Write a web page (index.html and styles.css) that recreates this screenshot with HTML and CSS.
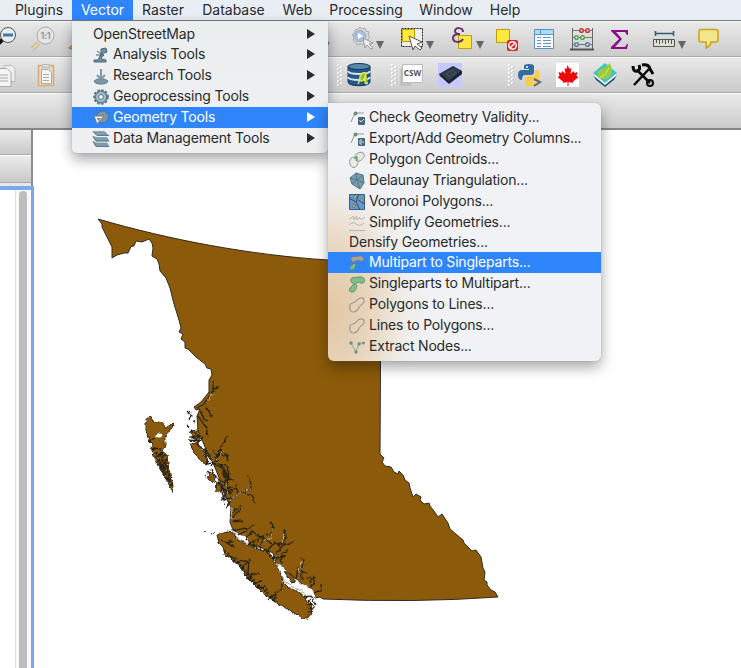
FILE: index.html
```html
<!DOCTYPE html>
<html lang="en">
<head>
<meta charset="utf-8">
<title>Vector menu</title>
<link rel="stylesheet" href="styles.css">
</head>
<body>
<div class="app">
<nav class="menubar">
<span>Plugins</span><span class="open">Vector</span><span>Raster</span><span>Database</span><span>Web</span><span>Processing</span><span>Window</span><span>Help</span>
</nav>

<div class="toolbar tools-main">
<svg viewBox="0 0 24 24"><path d="M7 17l4-4" stroke="#111" stroke-width="4"/><circle cx="16" cy="9" r="7.500" fill="#e8edf2" stroke="#555"/><path d="M11 9h10" stroke="#3f77aa" stroke-width="3"/></svg>
<svg viewBox="0 0 24 24"><path d="M1.500 23l6-6" stroke="#aaa" stroke-width="4"/><path d="M1.500 23l6-6" stroke="#ecd58c" stroke-width="2.500"/><circle cx="14.500" cy="9.500" r="8.500" fill="#e4e4e4" stroke="#aaa"/><text x="14.500" y="13" class="ratio">1:1</text></svg>
<svg viewBox="0 0 24 24"><path d="M1 22l5-4v6z" fill="#e9bd20" stroke="#8b741d"/></svg>
<svg viewBox="0 0 24 24"><path d="M2 16h8l-4 7z" fill="#777"/></svg>
<svg viewBox="0 0 24 24"><path d="M10 1l2 2 3-1 1 3 3 1-1 3 2 2-2 2 0 3-3 1-2 2-3-1-3 1-1-3-3-2 1-3-2-2 3-2 0-3 3-1z" fill="#d5d7d9" stroke="#aaa"/><circle cx="10" cy="10" r="5.500" fill="#a8c3df" stroke="#9aabba"/><path d="M8 7l5 3-5 3z" fill="#fff"/><path d="M13 12l10 5-4 1 4 4-2 1-4-4-2 3z" fill="#eee" stroke="#999"/></svg>
<svg viewBox="0 0 24 24"><path d="M1 15h8l-4 8z" fill="#666"/></svg>
<svg viewBox="0 0 24 24"><path d="M1.500 2.500h21v18h-21z" fill="#eee" stroke="#222" stroke-dasharray="2 1"/><path d="M2.500 3.500h12v12h-12z" fill="#ffe83f" stroke="#bda000"/><path d="M9 10l13 6-5 2 5 4-2 2-5-4-2 4z" fill="#fff" stroke="#555"/></svg>
<svg viewBox="0 0 24 24"><path d="M1 15h8l-4 8z" fill="#666"/></svg>
<svg viewBox="0 0 24 24"><path d="M8.500 9.500h13v13h-13z" fill="#ffe83f" stroke="#bda000"/><path d="M13 6c0-5-8-5-8-1 0 2 2 3 5 3-5 0-7 2-7 4 0 5 8 5 10 1" fill="none" stroke="#653565" stroke-width="2"/></svg>
<svg viewBox="0 0 24 24"><path d="M1 15h8l-4 8z" fill="#666"/></svg>
<svg viewBox="0 0 24 24"><path d="M1.500 3.500h13v13h-13z" fill="#ffe83f" stroke="#bda000"/><rect x="12" y="14" width="11" height="11" rx="2" fill="#d72626"/><circle cx="17.500" cy="19.500" r="3.700" fill="none" stroke="#fff" stroke-width="1.500"/><path d="M15 22l5-5" stroke="#fff" stroke-width="1.500"/></svg>
<svg viewBox="0 0 24 24"><path d="M2.500 3.500h19v19h-19z" fill="#f8fbff" stroke="#5d91c4"/><path d="M3 4h18v4H3z" fill="#a8dff5"/><path d="M2 8.500h20M8.500 4v5" stroke="#5d91c4"/><path d="M5 11.500h4m2 0h8M5 14.500h4m2 0h8M5 17.500h4m2 0h8M5 20.500h4m2 0h8" stroke="#6597c7"/></svg>
<svg viewBox="0 0 24 24"><path d="M2.500 2v22M22.500 2v22" stroke="#666"/><path d="M0 23.500h24" stroke="#555" stroke-width="2"/><path d="M3 4.500h19M3 11.500h19M3 18.500h19" stroke="#777"/><g fill="#eee" stroke-width="1.500"><g stroke="#c33"><circle cx="11.500" cy="4.500" r="1.800"/><circle cx="17.500" cy="4.500" r="1.800"/></g><g stroke="#55a55a"><circle cx="6.500" cy="11.500" r="1.800"/><circle cx="12.500" cy="11.500" r="1.800"/></g><g stroke="#537f9f"><circle cx="6.500" cy="18.500" r="1.800"/><circle cx="17.500" cy="18.500" r="1.800"/></g></g></svg>
<svg viewBox="0 0 24 24"><path d="M3 4h17v5h-1l-2-3H8l6 7-7 8h10l2-3h1l-1 5H3v-2l8-8-8-8z" fill="#880d88"/></svg>
<svg viewBox="0 0 24 24"><path d="M3.500 5v5m18-5v5M3 7.500h19" stroke="#315e76" stroke-width="1.600"/><path d="M1.500 13.500h21v7h-21z" fill="#dcded4" stroke="#555"/><path d="M4.500 14v3m3-3v4m3-4v3m3-3v4m3-4v3m3-3v4" stroke="#555"/></svg>
<svg viewBox="0 0 24 24"><path d="M1 15h8l-4 8z" fill="#666"/></svg>
<svg viewBox="0 0 24 24"><path d="M5 3.500h15q2 0 2 2V14q0 2-2 2h-5q-1 5-5 6 1-4 0-6H5q-2 0-2-2V5.500q0-2 2-2z" fill="#f3e68d" stroke="#c8a51c" stroke-width="1.500"/></svg>
<svg viewBox="0 0 24 24"><path d="M6.500 6.500h20v11h-20z" fill="#eee" stroke="#777" stroke-dasharray="1 1"/></svg>
</div>

<div class="toolbar tools-plugins">
<svg viewBox="0 0 24 24"><path d="M8 2.500h8l3 3v13H8z" fill="#eee" stroke="#bbb"/><path d="M2 5.500h9l4 4v14H2z" fill="#f4f4f4" stroke="#aaa"/><path d="M3 12h9m-9 3h9m-9 3h9" stroke="#aaa"/></svg>
<svg viewBox="0 0 24 24"><path d="M4.500 2.500h15v20h-15z" fill="#e9d7bc" stroke="#d3ad79" stroke-width="1.500"/><path d="M8.500 1.500h7v3h-7z" fill="#ddd" stroke="#bbb"/><path d="M7.500 6.500h7l3 3v11h-10z" fill="#f5f5f5" stroke="#aaa"/><path d="M9 11.500h6m-6 3h6m-6 3h6" stroke="#aaa"/></svg>
<svg viewBox="0 0 24 24"><path d="M2 1v23M5 3v20" stroke="#fff" stroke-width="2" stroke-dasharray="2 2"/><path d="M3 2v22M6 4v20" stroke="#aaa" stroke-dasharray="1 3"/></svg>
<svg viewBox="0 0 24 24"><path d="M1 3v16c0 5 22 5 22 0V3z" fill="#245687" stroke="#17385a"/><ellipse cx="12" cy="3.500" rx="11" ry="3" fill="#5788aa" stroke="#17385a"/><path d="M1 8c1 4 21 4 22 0M1 14c1 4 21 4 22 0" fill="none" stroke="#d2e4ed" stroke-width="2"/><path d="M19 10c-5-1-7 4-6 7 2 3 5-1 6-7l-1 8c0 3 1 3 3 2M13 17l-2 4" fill="#93bd35" stroke="#dce94b" stroke-width="1.500"/></svg>
<svg viewBox="0 0 24 24"><path d="M2 1v23M5 3v20" stroke="#fff" stroke-width="2" stroke-dasharray="2 2"/><path d="M3 2v22M6 4v20" stroke="#aaa" stroke-dasharray="1 3"/></svg>
<svg viewBox="0 0 24 24"><path d="M1.500 5.500v16h10" fill="none" stroke="#bbb" stroke-width="2"/><path d="M2.500 1.500h20v18h-20z" fill="#fff" stroke="#bbb"/><text x="12.500" y="13" class="csw">CSW</text></svg>
<svg viewBox="0 0 24 24"><path d="M0 0h24v24H0z" fill="#c7c8ff"/><path d="M1 11l14-8 9 5v3l-13 10-9-8z" fill="#16232e"/><path d="M2 11l13-7 8 4-12 10z" fill="#2e3d4a"/><path d="M8 11l6-4 4 3-7 4z" fill="none" stroke="#435463"/></svg>
<svg viewBox="0 0 24 24"><path d="M2 1v23M5 3v20" stroke="#fff" stroke-width="2" stroke-dasharray="2 2"/><path d="M3 2v22M6 4v20" stroke="#aaa" stroke-dasharray="1 3"/></svg>
<svg viewBox="0 0 24 24"><path d="M6 6V3q0-2 5-2t5 2v6q0 3-3 3H7q-3 0-3 5-4 0-4-5t4-5h7V6z" fill="#316e9e"/><path d="M17 7h2q3 0 3 5t-3 6h-7v1h5v2q0 2-5 2t-5-2v-5q0-3 3-3h5q2 0 2-3z" fill="#f8ce48"/><circle cx="9" cy="4" r="1" fill="#fff"/><path d="M16 16l6 3-6 4" fill="none" stroke="#666" stroke-width="2"/></svg>
<svg viewBox="0 0 24 24"><path d="M0 0h23v24H0z" fill="#fff"/><path d="M11.500 2l2 4 2-1-1 6 3-3 1 2 3-1-1 4 2 1-6 5 1 1-5-1v4h-1v-4l-5 1 1-1-6-5 2-1-1-4 3 1 1-2 3 3-1-6 2 1z" fill="#ef0808"/></svg>
<svg viewBox="0 0 24 24"><path d="M0 12l12 9 12-9-3 5-9 7-9-7z" fill="#245e6d"/><path d="M0 10L12 0l12 10-12 10z" fill="#3cc4cf"/><path d="M1 12l11 9 11-9" fill="none" stroke="#fff" stroke-width="1.500"/><path d="M5 14C3 5 11 7 17 0c4 9 1 17-7 16-2 0-4-1-5-2z" fill="#9bca3b"/><path d="M7 15q7-4 9-10" fill="none" stroke="#d9ec84"/></svg>
<svg viewBox="0 0 24 24"><g fill="none" stroke="#080808"><path d="M6 7l13 13M18 6L3 22" stroke-width="2.500"/><path d="M2 3q0 6 4 5t2-6M11 2q7-1 8 4l3 5" stroke-width="3"/><circle cx="19" cy="20" r="3" stroke-width="2"/></g></svg>
</div>
<div class="toolbar tools-empty"></div>

<div class="workspace">
<aside class="side">
<div class="panel-head"></div><div class="panel-head tall"></div><div class="panel-edge"></div>
<div class="layer-list"><div class="scroll"><div class="thumb"></div></div></div>
</aside>
<main class="canvas">
<svg class="map" viewBox="33 130 708 538">
<defs><filter id="rough" x="-10%" y="-10%" width="120%" height="120%"><feTurbulence type="fractalNoise" baseFrequency=".22" numOctaves="2" seed="8"/><feDisplacementMap in="SourceGraphic" scale="4" xChannelSelector="R" yChannelSelector="G"/></filter></defs>
<g class="land">
<path d="M98 219C170 240 250 255 328 260L381 262 380 454 384 458 382 462 385 466 391 467 394 472 398 474 399 471 403 475 405 480 409 483 410 488 413 497 416 494 421 497 420 500 424 504 429 503 430 506 434 511 438 517 442 514 448 523 450 529 457 535 463 540 464 543 472 551 476 550 481 557 483 568 485 572 484 580 487 582 487 585 491 590 495 592 498 597Q415 603 323 599L320 597 315 598 313 590 305 587 298 580 290 575 283 567 276 562 273 553 262 548 250 545 248 540 242 535 233 530 230 522 231 507 227 500 222 488 219 478 216 470 213 463 207 452 203 442 198 431 197 416 200 409 196 410 194 407 201 402 209 392 209 380 212 375 211 369 207 368 205 364 196 357 188 349 185 348 185 342 181 339 183 334 179 332 181 328 179 320 174 304 170 288 166 278 160 271 159 264 157 259 152 256 153 248 152 243 149 239 142 242 136 241 134 246 131 246.500 128 253 124 253 117 255 112 258 112 247 102 227 102 224z"/>
</g>
<g filter="url(#rough)">
<g class="land">
<path d="M150 416l3 5 5 1 5 1 2 4 4-1 5-3-3 7-6 7v8l-3 6 5 4 1 9 2 10 3 12v6l-6-11-6-11-7-14-3-8 2-4-4-4-3-10v-11z"/>
<path d="M217 535l10-3 6 1 5 7 10 5 12 5 10 3 5 9 5 10 3 10 5 5 10 5 7 6 5 7 2 10-7 4-13-7-15-9-14-10-10-10-8-8-8-13-12-7-2-8-4-4z"/>
<path d="M190 443l8 1 6 9 4 11-5-1-8-9zM190 431l8-1 2 8-6 1zM208 471l6 5 1 7-6-4zM217 482l4 5-1 6-4-3z"/>
</g>
<g class="strait">
<path d="M155 436l5-3 3 2-4 3zM231 529l7 5 10 3 1 7-10-4zM277 563l8 6 8 10 12 6 8 5 3 8-9-3-12-8-11-6z"/>
</g>
<path class="land" d="M284 571l7 3 5 7-5 1z"/>
<g class="inlets">
<path d="M213 381v10l-10 14-6 3M213 388l6-1M200 410l4 9 4 2M198 416l8 11 2 9M205 405l7 12M202 437l-5 8 9 5 8 14 6-3M191 431l8 5-8 1 9 4-12-1M205 450l3 14 9-4 5-16 6-8M211 467l7-13 10 2M220 449l6 5 2 7M217 456l-4-6M218 464l9 2 2 10-8-3"/>
<path d="M212 463l12 6 3 10-8 4 4 12 2 9M223 470l3 12-4 7 9-1-9 11 9-1-5 10M225 480l9-1M230 473l-3 13M221 486l11 8M226 494l10-6M229 501l13-9 9-3-1-10-3-3M243 492l8 3 4 8M238 494l-2-9M231 514l8-7M232 522l11-1M232 517l8-7 1-5M234 530l16-2 4-3M238 535l10-5M246 539l6-8 8 6 11-3 2-9-3-3"/>
<path d="M248 545l13-9 11 8M254 547l5-8M260 546l4-10M267 551l8-9 7 3 4-8-1-7M281 549l-5-7M276 554l9-10 9-2M276 558l10-2M281 564l1-11 6-3M296 579l2-11 4-1 2-7-4-2M302 580l-1-9 6 2M307 579l4-2M309 588l5-4 1-9-5 8M314 592l7-1v-7"/>
<path d="M153 448l8 1M155 458l9-5M158 462l8-2M163 469l4-5M168 480l4-3M150 441l6-4M160 453l4 12-1 11M167 465l2 15M221 540l9 4 5 4M226 543l8-2M229 556l10 3M233 562l14-1M241 569l8-9-1 14 11-1M247 578l8-5M253 583l9-2M257 588l9-1M268 600l8-7 6-4v-6M274 602l2-8M304 596l8 2 4 7M306 606l6-3M309 613l5-6-4-5"/>
<path d="M211 470l5 7M215 477l5 4M218 482l9 10M203 449l8 11M190 412l-2 2 3 2-2 3M187 411l1 1M187 425l2 2M193 421l2 1M204 531l1 0M210 532l2 1M214 534h1M206 475l1 4"/>
</g>
<path class="coastal-detail" d="M221 466l8 13-7 8 4 5-3 8M154 448l9 23 9 15M158 456l4-3 5 9-5 4 4 7M224 552l18 15 10 14 14 10 12 13M249 543l17 8 8 8M306 597l5 8-2 8"/>
<path class="fjord-water" d="M213 394l-6 8M224 451l-9 10M229 501l13-9 9-3M232 508l-1 11M272 529l-1 8-7 5M301 562l-2 10M282 543l3-9M226 483l2 12M213 460l-5 3"/>
</g>
</svg>
</main>
</div>

<div class="menu vector-menu">
<div class="item plain">OpenStreetMap<i></i></div>
<div class="item"><svg viewBox="0 0 16 16"><path d="M8 2l5-1 1 4-3 1-3 6 5 1v2H1v-2h4l3-6z" fill="#6e8fa2" stroke="#48687a"/><path d="M3 8h6M4 4l7 5" stroke="#48687a"/></svg>Analysis Tools<i></i></div>
<div class="item"><svg viewBox="0 0 16 16"><path d="M1 13q7-5 14 0-1 3-7 3t-7-3z" fill="#7898aa" stroke="#59778a"/><path d="M8 1v9M4 7l4 4 4-4" fill="none" stroke="#7f99a8" stroke-width="2"/></svg>Research Tools<i></i></div>
<div class="item"><svg viewBox="0 0 16 16"><circle cx="8" cy="8" r="6.800" fill="#8ba5b4" stroke="#58798c" stroke-width="2" stroke-dasharray="2.500 1.500"/><circle cx="8" cy="8" r="5.500" fill="#aabcc6" stroke="#58798c"/><circle cx="8" cy="8" r="2.500" fill="#e8eef1" stroke="#58798c"/></svg>Geoprocessing Tools<i></i></div>
<div class="item selected"><svg viewBox="0 0 16 16"><circle cx="9.500" cy="7" r="6" fill="#7897a9" stroke="#526f80"/><path d="M1 6h10l-7 8z" fill="#eef2f4" stroke="#777"/><path d="M4 8h4l-3 3z" fill="#6e8998"/></svg>Geometry Tools<i></i></div>
<div class="item"><svg viewBox="0 0 16 16"><g fill="#7f9dac" stroke="#6f8e9e" stroke-width=".6"><path d="M0 .5h11.500l4 4H4z"/><path d="M0 5.500l3 4.500h13l-2-3.500H4z"/><path d="M0 10.500l3 5h13l-2-3.500H4z"/></g><path d="M0 .5l4 4h12M0 5.500L3 10h13M0 10.500l3 5h13" fill="none" stroke="#55707f" stroke-width=".8"/></svg>Data Management Tools<i></i></div>
</div>

<div class="menu geometry-menu">
<div class="item"><svg viewBox="0 0 16 16"><path d="M2 12L6 3h9" fill="none" stroke="#999"/><circle cx="6.500" cy="3.500" r="1.500" fill="#78a27c" stroke="#567b5c"/><rect x="9" y="7" width="7" height="8" rx="1" fill="#456578"/><path d="M10.500 10l1.500 2 3-3" fill="none" stroke="#dce6ec"/></svg>Check Geometry Validity...</div>
<div class="item"><svg viewBox="0 0 16 16"><path d="M2 12L6 3h9" fill="none" stroke="#999"/><circle cx="6.500" cy="3.500" r="1.500" fill="#78a27c" stroke="#567b5c"/><rect x="9" y="7" width="7" height="8" rx="1" fill="#456578"/><path d="M13 9h-2v4h2m-1-2h3" fill="none" stroke="#dce6ec"/></svg>Export/Add Geometry Columns...</div>
<div class="item"><svg viewBox="0 0 16 16"><path d="M6 4c2-4 8-5 9-2 1 4-2 5-4 7-2 1-5 0-5-2z" fill="#e7e8e5" stroke="#92968f"/><path d="M1 8c1-3 4-3 6-2 3 2 2 5 1 7-1 3-5 3-6 1-1-1-2-4-1-6z" fill="#e7e8e5" fill-opacity=".8" stroke="#92968f"/><path d="M5 6h4M7.500 4v5" stroke="#72a878" stroke-width="1.600"/></svg>Polygon Centroids...</div>
<div class="item"><svg viewBox="0 0 16 16"><path d="M1 5l6-5 7 2 1 8-4 6-8-5z" fill="#789aac" stroke="#53778a"/><path d="M1 5l7 2 6-5M7 0l1 7 7 3M8 7l3 9M8 7l-5 4" fill="none" stroke="#53778a"/></svg>Delaunay Triangulation...</div>
<div class="item"><svg viewBox="0 0 16 16"><path d="M.5.500h15v15H.5z" fill="#6997ca" stroke="#32618f"/><path d="M0 4l7 4 4 8M7 8l3-8M9 6l7 4" fill="none" stroke="#294f7b"/><g fill="#b8c68d" stroke="#617e65"><circle cx="6" cy="3" r="1.500"/><circle cx="13" cy="6" r="1.500"/><circle cx="5" cy="12" r="1.500"/></g></svg>Voronoi Polygons...</div>
<div class="item"><svg viewBox="0 0 16 16"><path d="M0 4l2-1 2-2 1 4 2-4 1 4 2-3 1 2h2l3-2M0 10q4-4 7-1t8-1M0 15.500h16" fill="none" stroke="#b4b6b6"/></svg>Simplify Geometries...</div>
<div class="item plain">Densify Geometries...</div>
<div class="item selected"><svg viewBox="0 0 16 16"><path d="M2 5c-1-5 4-3 8-4 6-1 6 5 3 5-3 1-4-2-6 0s-4 1-5-1z" fill="#a2a3a2" stroke="#777"/><path d="M3 10c2-3 4-1 4 0-1 2-1 5-4 5s-3-3 0-5z" fill="#82b887" stroke="#578767"/></svg>Multipart to Singleparts...</div>
<div class="item"><svg viewBox="0 0 16 16"><path d="M2 5c-1-5 4-3 8-4 6-1 7 5 4 6-3 1-4-2-6 0s-5 1-6-2zM3 10c2-3 5-1 5 0-1 2-1 6-5 6s-3-4 0-6z" fill="#84bd87" stroke="#60936a"/></svg>Singleparts to Multipart...</div>
<div class="item"><svg viewBox="0 0 16 16"><path class="outline" d="M1 8c1-3 4-1 6-4 3-4 8-4 8-1 1 4-4 5-5 7 0 2-3 5-6 5-3 0-4-4-3-7z"/></svg>Polygons to Lines...</div>
<div class="item"><svg viewBox="0 0 16 16"><path class="outline" d="M1 8c1-3 4-1 6-4 3-4 8-4 8-1 1 4-4 5-5 7 0 2-3 5-6 5-3 0-4-4-3-7z"/></svg>Lines to Polygons...</div>
<div class="item"><svg viewBox="0 0 16 16"><path d="M2 4l5 9 3-9h5" fill="none" stroke="#8ca69f"/><g fill="#69958b"><circle cx="2" cy="4" r="1.700"/><circle cx="7" cy="13" r="1.700"/><circle cx="10" cy="5" r="1.700"/><circle cx="14.500" cy="4" r="1.500"/></g></svg>Extract Nodes...</div>
</div>
</div>
</body>
</html>
```
FILE: styles.css
```css
* { box-sizing: border-box; }
body { margin: 0; font-family: Inter, "Liberation Sans", sans-serif; font-size: 14px; color: #282a2c; }
.app { position: relative; width: 741px; height: 668px; overflow: hidden; display: flex; flex-direction: column; background: #fff; }
.menubar { height: 21px; flex: none; display: grid; grid-template-columns: 66px 61px 60px 81px 47px 90px 70px 48px; padding-left: 6px; background: #e9eef5; border-bottom: 1px solid #74797d; text-align: center; line-height: 20px; }
.menubar .open { background: #2f86fc; color: #fff; }
.toolbar { height: 36px; flex: none; display: grid; align-items: center; background: linear-gradient(#e9e9e9, #cbcbcb); border-top: 1px solid #f8f8f8; border-bottom: 1px solid #aaa; }
.toolbar svg { width: 24px; height: 26px; overflow: visible; }
.tools-main { margin-left: -8px; grid-template-columns: 39px 37px 252px 30px repeat(5, 25px) 25px 37px 38px 38px 44px 25px 19px 40px 24px; }
.tools-main svg { transform: translateY(-1px); }
.tools-main svg:nth-child(n+11) { transform: translate(-5px, -1px); }
.tools-plugins { grid-template-columns: 34px 302px 11px 43px 10px 38px 69px 11px 38px 37px 38px 24px; }
.tools-plugins svg:first-child { transform: translateX(-4px); }
.tools-empty { height: 37px; border-bottom: 2px solid #858585; }
.ratio { font: bold 9px Inter; letter-spacing: -.3px; fill: #999; text-anchor: middle; }
.csw { font: bold 8px "Noto Sans"; fill: #555; text-anchor: middle; }
.workspace { display: flex; flex: 1; min-height: 0; }
.side { width: 33px; display: flex; flex-direction: column; background: #e7e7e7; border-right: 2px solid #8d8d8d; }
.panel-head { height: 25px; flex: none; background: linear-gradient(#ebebeb, #c9c9c9); border-bottom: 1px solid #aaa; }
.panel-head.tall { height: 28px; border-top: 1px solid #fff; }
.panel-edge { height: 3px; flex: none; }
.layer-list { flex: 1; min-height: 0; border-top: 4px solid #79aae7; border-right: 3px solid #79aae7; margin-right: -3px; background: #fff; display: flex; justify-content: flex-end; }
.scroll { width: 16px; background: #fafafa; border-left: 1px solid #ddd; padding: 1px 4px 0 3px; }
.thumb { width: 8px; height: 490px; border-radius: 4px; background: #bdbdbd; }
.canvas { flex: 1; min-width: 0; }
.map { display: block; width: 708px; height: 538px; }
.land { fill: #8b5a0a; stroke: #332b20; stroke-width: 1; }
.strait { fill: #fff; stroke: #6b604a; stroke-width: .6; }
.inlets { fill: none; stroke: #292419; stroke-width: 1.3; }
.coastal-detail { fill: none; stroke: #282319; stroke-width: 3; stroke-dasharray: 2 2; }
.fjord-water { fill: none; stroke: #d8d4cc; stroke-width: .8; stroke-dasharray: 3 1; }
.menu { position: absolute; padding: 4px 0; letter-spacing: -.19px; box-shadow: 0 0 1px #777, 0 6px 14px rgba(0,0,0,.36); }
.vector-menu { left: 72px; top: 21px; width: 256px; border-radius: 0 0 5px 5px; background: linear-gradient(#ebeeee, #eff0f2); }
.geometry-menu { left: 328px; top: 103px; width: 273px; border-radius: 0 6px 6px 6px; background: radial-gradient(ellipse 100px 150px at 0 210px, #e3c7a3 0, #e7d4bc 40%, #f0eeeb 80%, #f0f2f5 100%); }
.item { height: 21px; line-height: 19px; padding-bottom: 2px; display: flex; align-items: center; padding-left: 21px; white-space: nowrap; }
.item svg { width: 16px; height: 16px; margin-right: 4px; flex: none; overflow: visible; position: relative; top: 1px; }
.item.plain { height: 19px; line-height: 17px; }
.item.selected { background: #2f86fc; color: #fff; }
.item i { width: 0; height: 0; margin-left: auto; margin-right: 13px; border-left: 8px solid #292b2e; border-top: 5px solid transparent; border-bottom: 5px solid transparent; }
.item.selected i { border-left-color: #fff; }
.outline { fill: none; stroke: #999995; stroke-width: 1.2; }
```
